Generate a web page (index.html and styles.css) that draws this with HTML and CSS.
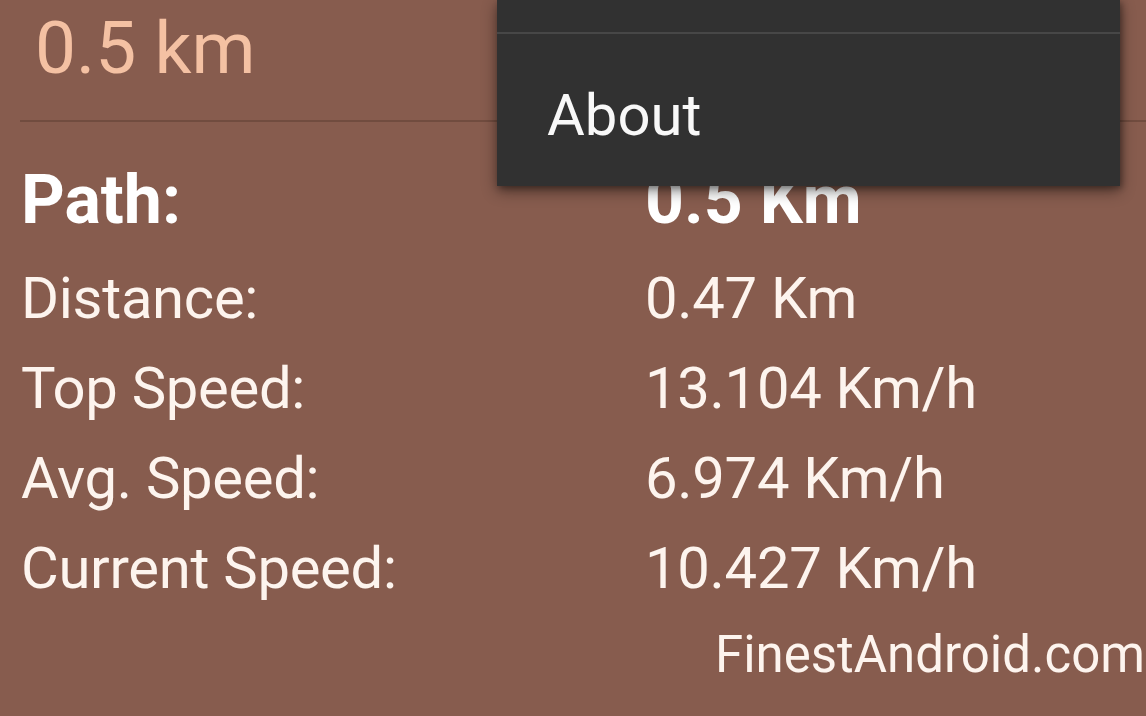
FILE: index.html
```html
<!DOCTYPE html>
<html lang="en">
<head>
<meta charset="utf-8">
<title>Path stats</title>
<link rel="stylesheet" href="styles.css">
</head>
<body>
<div class="screen">
  <div class="header">0.5 km</div>
  <div class="divider"></div>
  <div class="stats">
    <div class="row path"><span class="label">Path:</span><span class="value">0.5 Km</span></div>
    <div class="row"><span class="label">Distance:</span><span class="value">0.47 Km</span></div>
    <div class="row"><span class="label">Top Speed:</span><span class="value">13.104 Km/h</span></div>
    <div class="row"><span class="label">Avg. Speed:</span><span class="value">6.974 Km/h</span></div>
    <div class="row"><span class="label">Current Speed:</span><span class="value">10.427 Km/h</span></div>
  </div>
  <div class="footer">FinestAndroid.com</div>

  <div class="menu">
    <div class="menu-item partial"></div>
    <div class="menu-sep"></div>
    <div class="menu-item">About</div>
  </div>
</div>
</body>
</html>
```

FILE: styles.css
```css
html, body {
  margin: 0;
  padding: 0;
  height: 100%;
  overflow: hidden;
}

body {
  background: #875c4e;
  font-family: Roboto, "Noto Sans", "Liberation Sans", sans-serif;
  color: #fdf4ee;
}

.screen {
  position: relative;
  width: 1146px;
  height: 716px;
  overflow: hidden;
}

.header {
  padding: 8px 0 0 35px;
  font-size: 73px;
  line-height: 80px;
  color: #f4c1a3;
  height: 80px;
}

.divider {
  margin: 32px 0 0 20px;
  height: 2px;
  background: #714c3f;
}

.stats {
  margin-top: 25px;
  padding-left: 21px;
}

.row {
  display: grid;
  grid-template-columns: 624px 1fr;
  font-size: 58px;
  letter-spacing: -0.3px;
  line-height: 90px;
  white-space: nowrap;
}

.row.path {
  font-size: 68px;
  font-weight: 700;
  letter-spacing: 0;
  line-height: 106px;
  color: #ffffff;
}

.footer {
  margin-top: 12px;
  padding-right: 1px;
  font-size: 51px;
  line-height: 60px;
  text-align: right;
}

.menu {
  position: absolute;
  left: 497px;
  top: 0;
  width: 623px;
  background: #313131;
  box-shadow: 0 5px 14px rgba(0, 0, 0, 0.45), 2px 2px 6px rgba(0, 0, 0, 0.3);
}

.menu-item {
  padding: 47px 0 37px 50px;
  font-size: 58px;
  line-height: 68px;
  color: #f8f8f8;
}

.menu-item.partial {
  padding: 0;
  height: 32px;
}

.menu-sep {
  height: 2px;
  background: #474747;
}
```
